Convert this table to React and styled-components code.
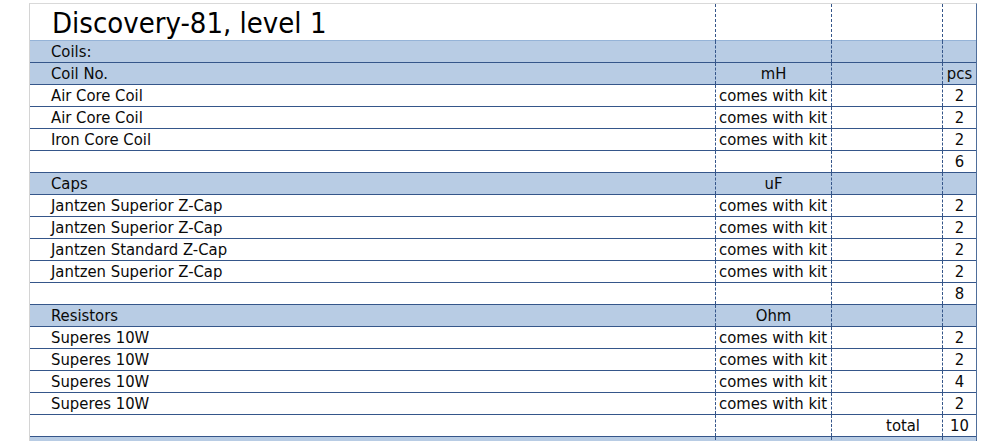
import React from "react";
import styled, { createGlobalStyle } from "styled-components";

const GlobalStyle = createGlobalStyle`
  html, body {
    margin: 0;
    padding: 0;
    background: #ffffff;
  }
  body {
    font-family: "DejaVu Sans Condensed", "DejaVu Sans", "Liberation Sans", sans-serif;
    color: #0a0a0a;
  }
`;

const COLS = "685px 116px 111px 34px";

const rows = [
  { head: true, cells: ["Coils:", "", "", ""] },
  { head: true, cells: ["Coil No.", "mH", "", "pcs"] },
  { cells: ["Air Core Coil", "comes with kit", "", "2"] },
  { cells: ["Air Core Coil", "comes with kit", "", "2"] },
  { cells: ["Iron Core Coil", "comes with kit", "", "2"] },
  { cells: ["", "", "", "6"] },
  { head: true, cells: ["Caps", "uF", "", ""] },
  { cells: ["Jantzen Superior Z-Cap", "comes with kit", "", "2"] },
  { cells: ["Jantzen Superior Z-Cap", "comes with kit", "", "2"] },
  { cells: ["Jantzen Standard Z-Cap", "comes with kit", "", "2"] },
  { cells: ["Jantzen Superior Z-Cap", "comes with kit", "", "2"] },
  { cells: ["", "", "", "8"] },
  { head: true, cells: ["Resistors", "Ohm", "", ""] },
  { cells: ["Superes 10W", "comes with kit", "", "2"] },
  { cells: ["Superes 10W", "comes with kit", "", "2"] },
  { cells: ["Superes 10W", "comes with kit", "", "4"] },
  { cells: ["Superes 10W", "comes with kit", "", "2"] },
  { cells: ["", "", "total", "10"] },
  { head: true, cells: ["", "", "", ""] },
];

const Sheet = styled.div`
  margin: 3px 0 0 29px;
  width: 948px;
  box-sizing: border-box;
  border-top: 1px solid #d9d9d9;
  border-left: 1px solid #d4d4d4;
  border-right: 1px solid #4f6e9b;
`;

const Row = styled.div`
  display: grid;
  grid-template-columns: ${COLS};
  height: ${(p) => (p.$title ? 37 : 22)}px;
  box-sizing: border-box;
  border-bottom: 1px solid ${(p) => (p.$title ? "#95b3d7" : "#35568a")};
  background: ${(p) => (p.$head ? "#b8cce4" : "#ffffff")};
`;

const Cell = styled.div`
  box-sizing: border-box;
  border-left: ${(p) => (p.$divider ? "1px dashed #35568a" : "none")};
  font-size: 16.5px;
  line-height: 22px;
  white-space: nowrap;
  overflow: hidden;
  text-align: ${(p) => p.$align || "left"};
  padding: ${(p) => p.$pad || "0"};
`;

const Title = styled.div`
  font-size: 29px;
  line-height: 38px;
  color: #000000;
  padding-left: 22px;
  white-space: nowrap;
`;

const cellProps = (row, i) => {
  if (i === 0) return { $pad: "0 0 0 21px" };
  if (i === 1)
    return row.head
      ? { $divider: true, $align: "center" }
      : { $divider: true, $pad: "0 0 0 3px" };
  if (i === 2) return { $divider: true, $align: "right", $pad: "0 22px 0 0" };
  return { $divider: true, $align: "center" };
};

export default function App() {
  return (
    <>
      <GlobalStyle />
      <Sheet>
        <Row $title>
          <Title>Discovery-81, level 1</Title>
          <Cell $divider />
          <Cell $divider />
          <Cell $divider />
        </Row>
        {rows.map((row, r) => (
          <Row key={r} $head={row.head}>
            {row.cells.map((text, i) => (
              <Cell key={i} {...cellProps(row, i)}>
                {text}
              </Cell>
            ))}
          </Row>
        ))}
      </Sheet>
    </>
  );
}
